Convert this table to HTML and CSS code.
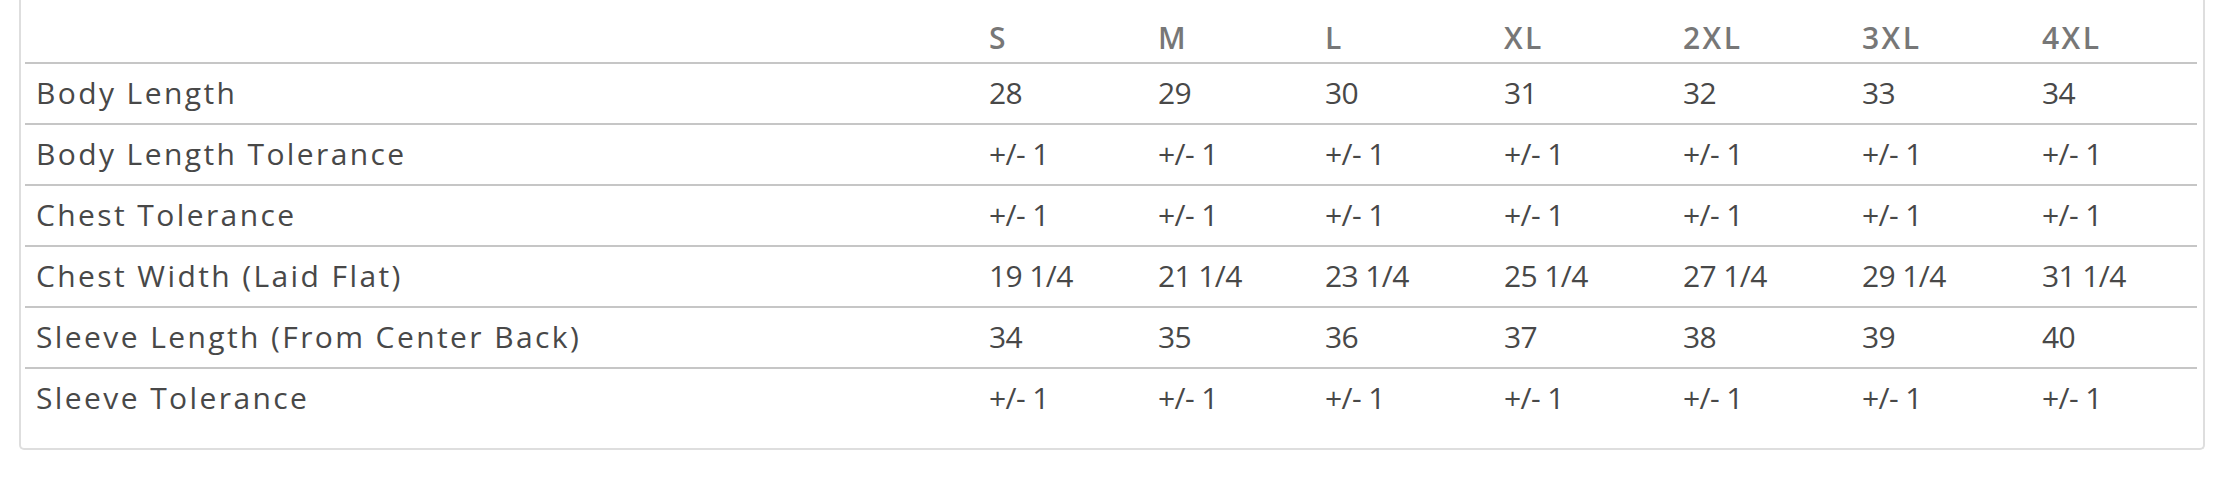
FILE: index.html
```html
<!DOCTYPE html>
<html lang="en">
<head>
<meta charset="utf-8">
<title>Size Chart</title>
<link rel="stylesheet" href="styles.css">
</head>
<body>
<div class="chart-box">
  <table class="size-table">
    <colgroup>
      <col class="col-label">
      <col class="col-s">
      <col class="col-m">
      <col class="col-l">
      <col class="col-xl">
      <col class="col-2xl">
      <col class="col-3xl">
      <col class="col-4xl">
    </colgroup>
    <thead>
      <tr>
        <th></th><th>S</th><th>M</th><th>L</th><th>XL</th><th>2XL</th><th>3XL</th><th>4XL</th>
      </tr>
    </thead>
    <tbody>
      <tr>
        <td class="label">Body Length</td><td>28</td><td>29</td><td>30</td><td>31</td><td>32</td><td>33</td><td>34</td>
      </tr>
      <tr>
        <td class="label">Body Length Tolerance</td><td>+/- 1</td><td>+/- 1</td><td>+/- 1</td><td>+/- 1</td><td>+/- 1</td><td>+/- 1</td><td>+/- 1</td>
      </tr>
      <tr>
        <td class="label">Chest Tolerance</td><td>+/- 1</td><td>+/- 1</td><td>+/- 1</td><td>+/- 1</td><td>+/- 1</td><td>+/- 1</td><td>+/- 1</td>
      </tr>
      <tr>
        <td class="label">Chest Width (Laid Flat)</td><td>19 1/4</td><td>21 1/4</td><td>23 1/4</td><td>25 1/4</td><td>27 1/4</td><td>29 1/4</td><td>31 1/4</td>
      </tr>
      <tr>
        <td class="label">Sleeve Length (From Center Back)</td><td>34</td><td>35</td><td>36</td><td>37</td><td>38</td><td>39</td><td>40</td>
      </tr>
      <tr>
        <td class="label">Sleeve Tolerance</td><td>+/- 1</td><td>+/- 1</td><td>+/- 1</td><td>+/- 1</td><td>+/- 1</td><td>+/- 1</td><td>+/- 1</td>
      </tr>
    </tbody>
  </table>
</div>
</body>
</html>
```
FILE: styles.css
```css
html, body {
  margin: 0;
  padding: 0;
  background: #ffffff;
}

body {
  font-family: "Open Sans", "Liberation Sans", sans-serif;
  color: #484848;
}

.chart-box {
  margin-left: 19px;
  width: 2177px;
  border: 2px solid #dedede;
  border-top: none;
  border-radius: 0 0 5px 5px;
  padding: 0 1px 20px 4px;
  box-sizing: content-box;
}

.size-table {
  width: 2172px;
  border-collapse: collapse;
  table-layout: fixed;
}

.col-label { width: 953px; }
.col-s { width: 169px; }
.col-m { width: 167px; }
.col-l { width: 179px; }
.col-xl { width: 179px; }
.col-2xl { width: 179px; }
.col-3xl { width: 180px; }
.col-4xl { width: 166px; }

.size-table th {
  font-size: 30px;
  line-height: 40px;
  font-weight: 600;
  color: #777777;
  text-align: left;
  padding: 18px 11px 4px;
  border-bottom: 2px solid #c6c6c6;
  white-space: nowrap;
  letter-spacing: 2.4px;
}

.size-table td {
  font-size: 30px;
  line-height: 40px;
  font-weight: 400;
  text-align: left;
  padding: 9px 11px 10px;
  white-space: nowrap;
  letter-spacing: -0.6px;
}

.size-table td.label {
  letter-spacing: 2.4px;
}

.size-table tbody tr + tr td {
  border-top: 2px solid #c6c6c6;
}
```
